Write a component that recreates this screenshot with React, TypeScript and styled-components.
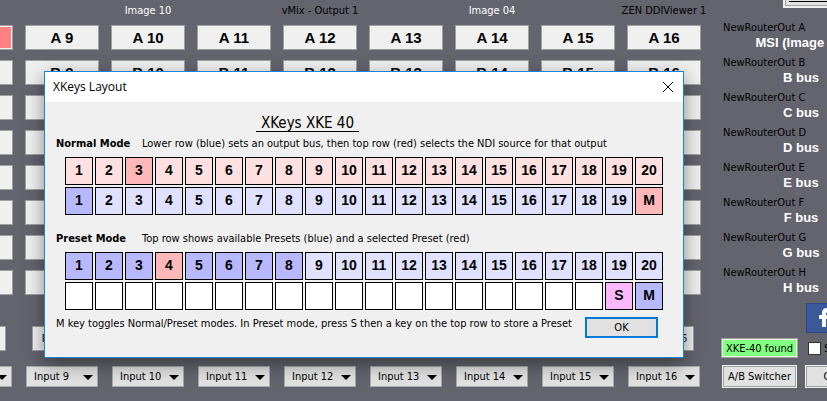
import React from "react";
import styled, { createGlobalStyle } from "styled-components";

const uiFont = `"DejaVu Sans Condensed", "DejaVu Sans", Tahoma, sans-serif`;
const boldFont = `"Liberation Sans", Arial, sans-serif`;

const GlobalStyle = createGlobalStyle`
  *, *::before, *::after { box-sizing: border-box; }
  html, body { margin: 0; background: #64646f; overflow: hidden; }
  body { font: 11px/14px ${uiFont}; color: #000; }
  button, select, input { font: inherit; color: inherit; margin: 0; }
`;

const Desktop = styled.div`
  position: relative;
  display: flex;
  min-height: 100vh;
  overflow: hidden;
  background: #64646f;
`;

const Matrix = styled.main`
  flex: 1 1 0;
  min-width: 0;
  display: flex;
  flex-direction: column;
  align-items: flex-end;
  overflow: hidden;
  padding: 4px 10px 0 0;
`;

const Row = styled.div<{ $gapAfter?: number }>`
  display: grid;
  grid-template-columns: repeat(9, 74px);
  column-gap: 12px;
  justify-items: center;
  margin-bottom: ${(p) => p.$gapAfter ?? 10}px;
`;

const SourceLabel = styled.span<{ $light?: boolean }>`
  height: 14px;
  white-space: nowrap;
  color: ${(p) => (p.$light ? "#fff" : "#000")};
`;

const BusButton = styled.button<{ $active?: boolean }>`
  width: 100%;
  height: 25px;
  padding: 0;
  border: 1px solid #a0a0a0;
  background: ${(p) => (p.$active ? "#ff8080" : "#f0f0f0")};
  box-shadow: ${(p) => (p.$active ? "inset 0 0 0 1px #f0f0f0" : "none")};
  font: bold 15px/20px ${boldFont};
`;

const PresetButton = styled.button`
  width: 60px;
  height: 25px;
  padding: 0;
  border: 1px solid #a0a0a0;
  background: #f0f0f0;
`;

const SelectFrame = styled.span`
  position: relative;
  display: block;
  width: 72px;
  height: 21px;
`;

const InputSelect = styled.select`
  appearance: none;
  width: 100%;
  height: 100%;
  padding: 0 0 0 7px;
  border: 1px solid #a9a9a9;
  border-radius: 0;
  background: #e1e1e1;
`;

const Arrow = styled.svg`
  position: absolute;
  right: 5px;
  top: 9px;
  pointer-events: none;
`;

const Outputs = styled.aside`
  flex: 0 0 106px;
  margin-left: 10px;
  overflow: hidden;
`;

const OutputsInner = styled.div`
  width: 160px;
  display: flex;
  flex-direction: column;
`;

const AboutButton = styled.button`
  align-self: flex-end;
  width: 98px;
  height: 22px;
  margin-top: -14px;
  padding: 0 0 0 4px;
  border: 2px solid #f0f0f0;
  outline: 1px solid #a0a0a0;
  outline-offset: -3px;
  background: #e1e1e1;
  text-align: left;
  text-decoration: underline;
`;

const OutputList = styled.dl`
  margin: 13px 0 0;
`;

const Output = styled.div`
  height: 35px;
  dt { padding-left: 2px; }
  dd {
    margin: 0;
    text-align: center;
    font: bold 13px/15px ${boldFont};
    color: #fff;
  }
`;

const FacebookLink = styled.a`
  display: block;
  align-self: flex-end;
  width: 75px;
  height: 30px;
  margin-top: 2px;
  border: 1px solid #2d4a86;
  background: #3b5998;
`;

const FooterRow = styled.div`
  display: flex;
  align-items: center;
`;

const Status = styled.output`
  width: 77px;
  height: 20px;
  margin: 5px 10px 0 0;
  border: 1px solid #a0a0a0;
  box-shadow: inset 0 0 0 1px #f0f0f0;
  background: #80ff80;
  text-align: center;
  line-height: 20px;
`;

const CheckLabel = styled.label`
  display: flex;
  align-items: center;
  gap: 3px;
  margin-top: 6px;
`;

const Check = styled.input`
  appearance: none;
  width: 13px;
  height: 13px;
  border: 1px solid #333;
  background: #fff;
`;

const ToolButton = styled.button`
  flex: none;
  width: 75px;
  height: 23px;
  margin: 7px 7px 0 1px;
  padding: 0;
  border: 1px solid #f0f0f0;
  outline: 1px solid #a0a0a0;
  outline-offset: -2px;
  background: #e1e1e1;
`;

const Dialog = styled.section`
  position: absolute;
  left: 44px;
  top: 71px;
  width: 640px;
  border: 1px solid #1883d7;
  background: #f0f0f0;
  box-shadow: 0 6px 18px rgba(0, 0, 0, 0.42);
`;

const TitleBar = styled.header`
  display: flex;
  align-items: center;
  justify-content: space-between;
  height: 30px;
  padding: 0 9px 0 8px;
  background: #fff;
  font: 12px/16px "Open Sans", "Noto Sans", sans-serif;
`;

const CloseButton = styled.button`
  display: flex;
  padding: 0;
  border: 0;
  background: none;
`;

const DialogBody = styled.div`
  padding: 13px 11px 19px;
`;

const Heading = styled.h1`
  width: 103px;
  margin: 0 0 0 200px;
  border-bottom: 1px solid #000;
  font: 15px/16px ${uiFont};
  text-align: center;
  white-space: nowrap;
`;

const ModeLine = styled.p<{ $top: number }>`
  display: flex;
  margin: ${(p) => p.$top}px 0 6px;
  white-space: nowrap;
  strong { width: 86px; }
`;

const KeyGrid = styled.div`
  display: grid;
  grid-template-columns: repeat(20, 28px);
  gap: 2px;
  padding-left: 9px;
`;

const tones = {
  paleRed: "#ffe0e0",
  red: "#ffb8b8",
  paleBlue: "#e0e0ff",
  blue: "#b8b8ff",
  pink: "#ffb8ff",
  white: "#fff",
};
type Tone = keyof typeof tones;

const Key = styled.span<{ $tone: Tone }>`
  height: 28px;
  border: 1px solid #000;
  background: ${(p) => tones[p.$tone]};
  font: bold 14px/25px ${boldFont};
  text-align: center;
`;

const DialogFooter = styled.footer`
  display: flex;
  justify-content: space-between;
  margin-top: 7px;
  padding-right: 14px;
  white-space: nowrap;
`;

const Hint = styled.p`
  margin: 0;
`;

const OkButton = styled.button`
  flex: none;
  width: 73px;
  height: 21px;
  padding: 0;
  border: 2px solid #0078d7;
  background: #e1e1e1;
`;

const columns = [8, 9, 10, 11, 12, 13, 14, 15, 16];
const buses = ["A", "B", "C", "D", "E", "F", "G", "H"];
const sources: Record<number, { name: string; light?: boolean }> = {
  10: { name: "Image 10", light: true },
  12: { name: "vMix - Output 1" },
  14: { name: "Image 04", light: true },
  16: { name: "ZEN DDIViewer 1" },
};
const numbers = Array.from({ length: 20 }, (_, i) => i + 1);

export default function App() {
  return (
    <>
      <GlobalStyle />
      <Desktop>
        <Matrix>
          <Row $gapAfter={7}>
            {columns.map((n) => (
              <SourceLabel key={n} $light={sources[n]?.light}>{sources[n]?.name}</SourceLabel>
            ))}
          </Row>
          {buses.map((bus) => (
            <Row key={bus} $gapAfter={bus === "H" ? 31 : 10}>
              {columns.map((n) => (
                <BusButton key={n} $active={bus === "A" && n === 8}>{bus} {n}</BusButton>
              ))}
            </Row>
          ))}
          <Row $gapAfter={15}>
            {columns.map((n) => <PresetButton key={n}>Preset {n}</PresetButton>)}
          </Row>
          <Row>
            {columns.map((n) => (
              <SelectFrame key={n}>
                <InputSelect aria-label={`Input ${n}`}><option>Input {n}</option></InputSelect>
                <Arrow width="10" height="5" viewBox="0 0 10 5"><path d="M0 0h10L5 5z" /></Arrow>
              </SelectFrame>
            ))}
          </Row>
        </Matrix>
        <Outputs>
          <OutputsInner>
            <AboutButton>About NDI</AboutButton>
            <OutputList>
              {buses.map((bus) => (
                <Output key={bus}>
                  <dt>NewRouterOut {bus}</dt>
                  <dd>{bus === "A" ? "MSI (Image 01)" : `${bus} bus`}</dd>
                </Output>
              ))}
            </OutputList>
            <FacebookLink href="#" aria-label="Facebook">
              <svg width="28" height="28" viewBox="0 0 28 28"><path fill="#fff" d="M15 23v-8h-3v-4h3V9q0-5 5-5h3v4h-2q-2 0-2 2v1h4l-1 4h-3v8z" /></svg>
            </FacebookLink>
            <FooterRow>
              <Status>XKE-40 found</Status>
              <CheckLabel><Check type="checkbox" />Show</CheckLabel>
            </FooterRow>
            <FooterRow>
              <ToolButton>A/B Switcher</ToolButton>
              <ToolButton>Options</ToolButton>
            </FooterRow>
          </OutputsInner>
        </Outputs>
        <Dialog role="dialog" aria-labelledby="dialog-title">
          <TitleBar>
            <span id="dialog-title">XKeys Layout</span>
            <CloseButton aria-label="Close">
              <svg width="12" height="12" viewBox="0 0 12 12"><path d="M1 1l10 10M11 1L1 11" stroke="#000" /></svg>
            </CloseButton>
          </TitleBar>
          <DialogBody>
            <Heading>XKeys XKE 40</Heading>
            <ModeLine $top={5}><strong>Normal Mode</strong>Lower row (blue) sets an output bus, then top row (red) selects the NDI source for that output</ModeLine>
            <KeyGrid>
              {numbers.map((n) => <Key key={n} $tone={n === 3 ? "red" : "paleRed"}>{n}</Key>)}
              {numbers.map((n) => (
                <Key key={`l${n}`} $tone={n === 1 ? "blue" : n === 20 ? "red" : "paleBlue"}>{n === 20 ? "M" : n}</Key>
              ))}
            </KeyGrid>
            <ModeLine $top={17}><strong>Preset Mode</strong>Top row shows available Presets (blue) and a selected Preset (red)</ModeLine>
            <KeyGrid>
              {numbers.map((n) => <Key key={n} $tone={n === 4 ? "red" : n <= 8 ? "blue" : "paleBlue"}>{n}</Key>)}
              {numbers.map((n) => (
                <Key key={`l${n}`} $tone={n === 19 ? "pink" : n === 20 ? "blue" : "white"}>{n === 19 ? "S" : n === 20 ? "M" : ""}</Key>
              ))}
            </KeyGrid>
            <DialogFooter>
              <Hint>M key toggles Normal/Preset modes. In Preset mode, press S then a key on the top row to store a Preset</Hint>
              <OkButton>OK</OkButton>
            </DialogFooter>
          </DialogBody>
        </Dialog>
      </Desktop>
    </>
  );
}
